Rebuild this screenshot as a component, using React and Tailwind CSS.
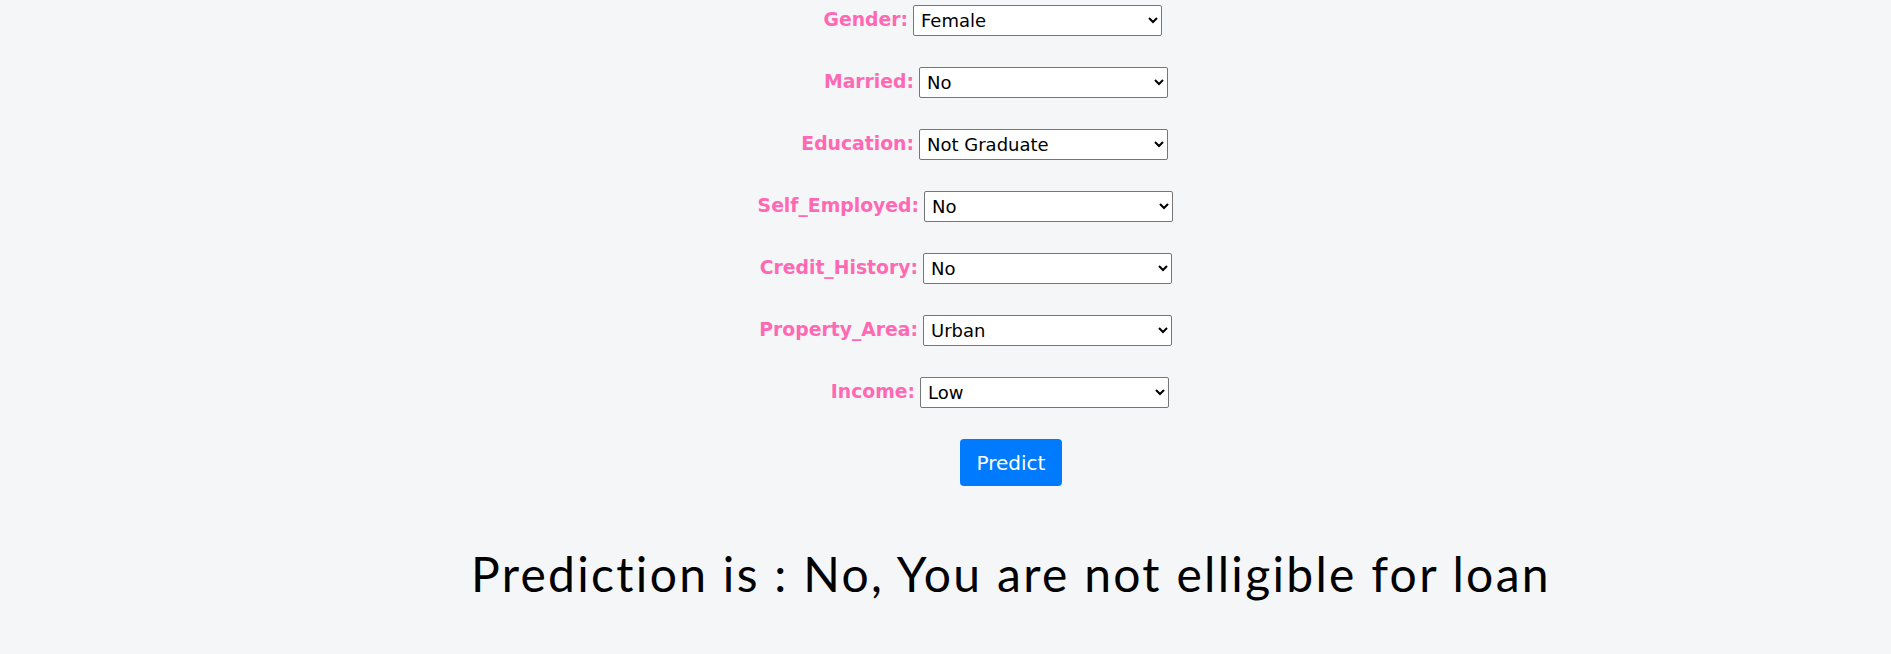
import React, { useState } from "react";

// form fields, with the select's left edge per row
const fields = [
  { name: "Gender", options: ["Female", "Male"], value: "Female", col: "w-[913px]" },
  { name: "Married", options: ["No", "Yes"], value: "No", col: "w-[919px]" },
  { name: "Education", options: ["Not Graduate", "Graduate"], value: "Not Graduate", col: "w-[919px]" },
  { name: "Self_Employed", options: ["No", "Yes"], value: "No", col: "w-[924px]" },
  { name: "Credit_History", options: ["No", "Yes"], value: "No", col: "w-[923px]" },
  { name: "Property_Area", options: ["Urban", "Rural", "Semiurban"], value: "Urban", col: "w-[923px]" },
  { name: "Income", options: ["Low", "Medium", "High"], value: "Low", col: "w-[920px]" },
];

const App = () => {
  const [form, setForm] = useState(
    Object.fromEntries(fields.map((f) => [f.name, f.value]))
  );

  const handleChange = (e) => {
    const { name, value } = e.target;
    setForm((prev) => ({ ...prev, [name]: value }));
  };

  return (
    <div className="min-h-[654px] bg-[#f5f6f8] font-['DejaVu_Sans',sans-serif]">
      <form
        className="flex flex-col gap-[31px] pt-[5px]"
        onSubmit={(e) => e.preventDefault()}
      >
        {fields.map((f) => (
          <div key={f.name} className="flex items-center h-[31px]">
            <label
              htmlFor={f.name}
              className={`${f.col} shrink-0 text-right pr-[5px] text-[18.8px] font-bold text-[#ff69b4]`}
            >
              {f.name}:
            </label>
            <select
              id={f.name}
              name={f.name}
              value={form[f.name]}
              onChange={handleChange}
              className="w-[249px] h-[31px] shrink-0 bg-white border border-[#767676] rounded-[2px] pl-[3px] text-[18px] text-black"
            >
              {f.options.map((o) => (
                <option key={o}>{o}</option>
              ))}
            </select>
          </div>
        ))}

        <div className="flex pl-[960px]">
          <button
            type="submit"
            className="w-[102px] h-[47px] bg-[#007bff] text-white text-[20px] rounded-[4px]"
          >
            Predict
          </button>
        </div>
      </form>

      <h2 className="pl-[471px] mt-[56px] text-[48px] leading-[64px] tracking-[2.3px] text-black font-['Lato',sans-serif]">
        Prediction is : No, You are not elligible for loan
      </h2>
    </div>
  );
};

export default App;
